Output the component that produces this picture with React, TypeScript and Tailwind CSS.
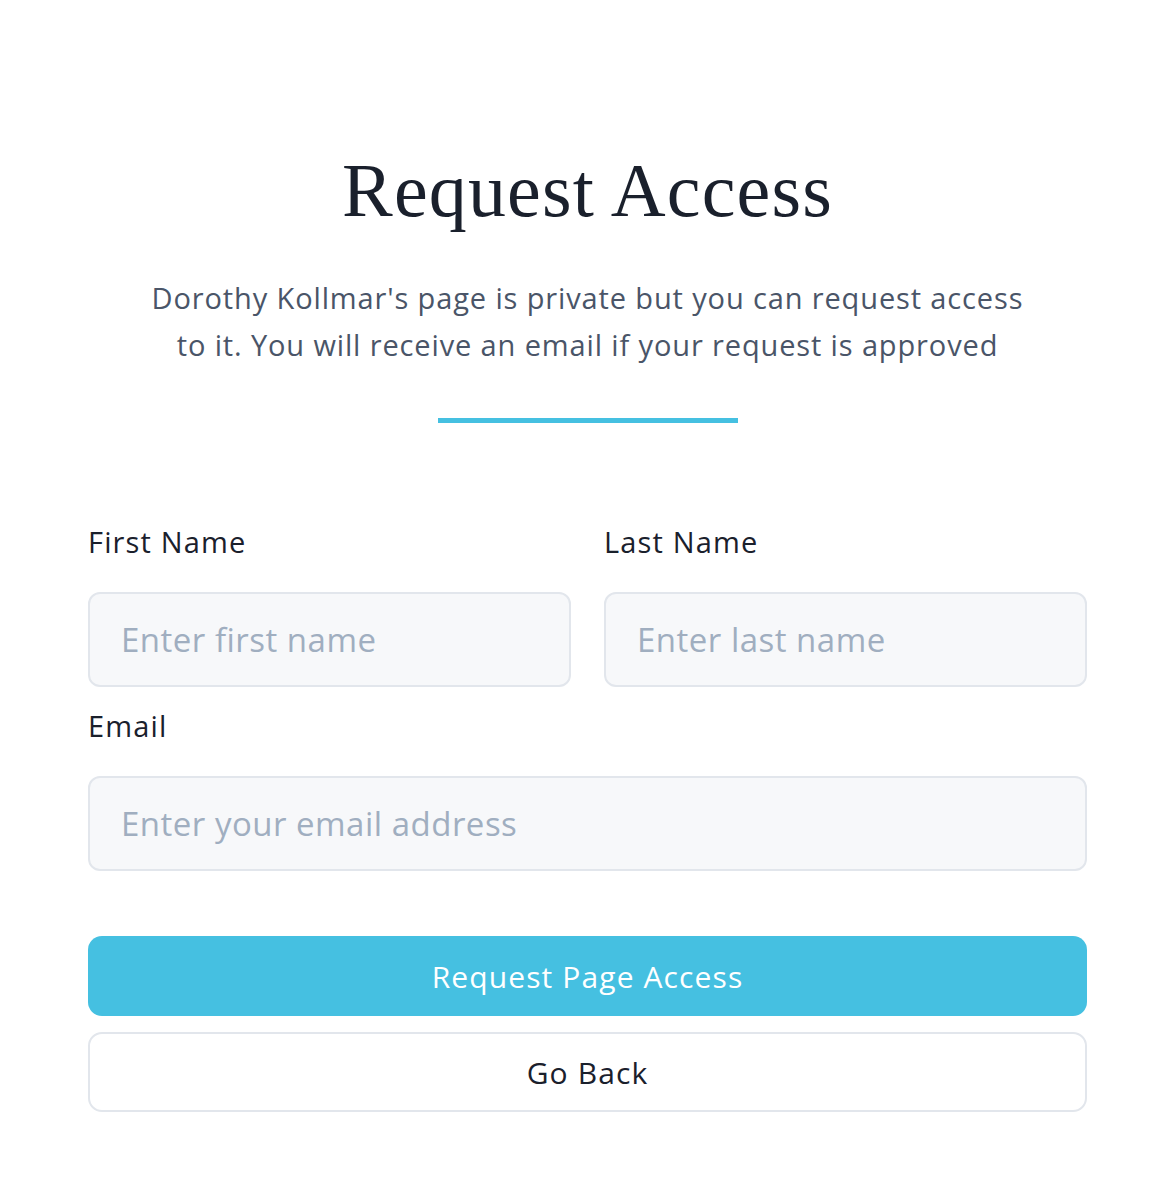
import React from "react";

export default function App() {
  const sans = { fontFamily: "'Open Sans', 'Noto Sans', sans-serif" };
  return (
    <div className="min-h-screen bg-white" style={sans}>
      <div className="ml-[88px] w-[999px] pt-[152px] pb-[86px] flex flex-col items-center">
        <h1
          className="text-[76px] leading-none tracking-[0.015em] text-[#1a202c] font-normal"
          style={{ fontFamily: "'Liberation Serif', serif" }}
        >
          Request Access
        </h1>
        <p className="mt-[46px] w-[980px] text-center text-[29px] leading-[47px] tracking-[0.03em] text-[#4a5568]">
          Dorothy Kollmar's page is private but you can request access
          <br />
          to it. You will receive an email if your request is approved
        </p>
        <div className="mt-[50px] h-[5px] w-[300px] bg-[#45c0e1]" />
        <div className="mt-[99px] w-full grid grid-cols-2 gap-x-[33px]">
          <div className="flex flex-col">
            <label className="text-[29px] leading-[40px] tracking-[0.04em] text-[#1a202c]">First Name</label>
            <input
              placeholder="Enter first name"
              className="mt-[30px] h-[95px] w-full rounded-[12px] border-2 border-[#e2e6ec] bg-[#f7f8fa] px-[31px] text-[33px] tracking-[0.015em] text-[#1a202c] placeholder:text-[#a0aec0] outline-none"
            />
          </div>
          <div className="flex flex-col">
            <label className="text-[29px] leading-[40px] tracking-[0.04em] text-[#1a202c]">Last Name</label>
            <input
              placeholder="Enter last name"
              className="mt-[30px] h-[95px] w-full rounded-[12px] border-2 border-[#e2e6ec] bg-[#f7f8fa] px-[31px] text-[33px] tracking-[0.015em] text-[#1a202c] placeholder:text-[#a0aec0] outline-none"
            />
          </div>
        </div>
        <div className="mt-[19px] w-full flex flex-col">
          <label className="text-[29px] leading-[40px] tracking-[0.04em] text-[#1a202c]">Email</label>
          <input
            placeholder="Enter your email address"
            className="mt-[30px] h-[95px] w-full rounded-[12px] border-2 border-[#e2e6ec] bg-[#f7f8fa] px-[31px] text-[33px] tracking-[0.015em] text-[#1a202c] placeholder:text-[#a0aec0] outline-none"
          />
        </div>
        <button className="mt-[65px] h-[80px] w-full rounded-[14px] bg-[#45c0e1] text-[30px] tracking-[0.037em] text-white">
          Request Page Access
        </button>
        <button className="mt-[16px] h-[80px] w-full rounded-[14px] border-2 border-[#e2e6ec] bg-white text-[30px] tracking-[0.037em] text-[#1a202c]">
          Go Back
        </button>
      </div>
    </div>
  );
}
